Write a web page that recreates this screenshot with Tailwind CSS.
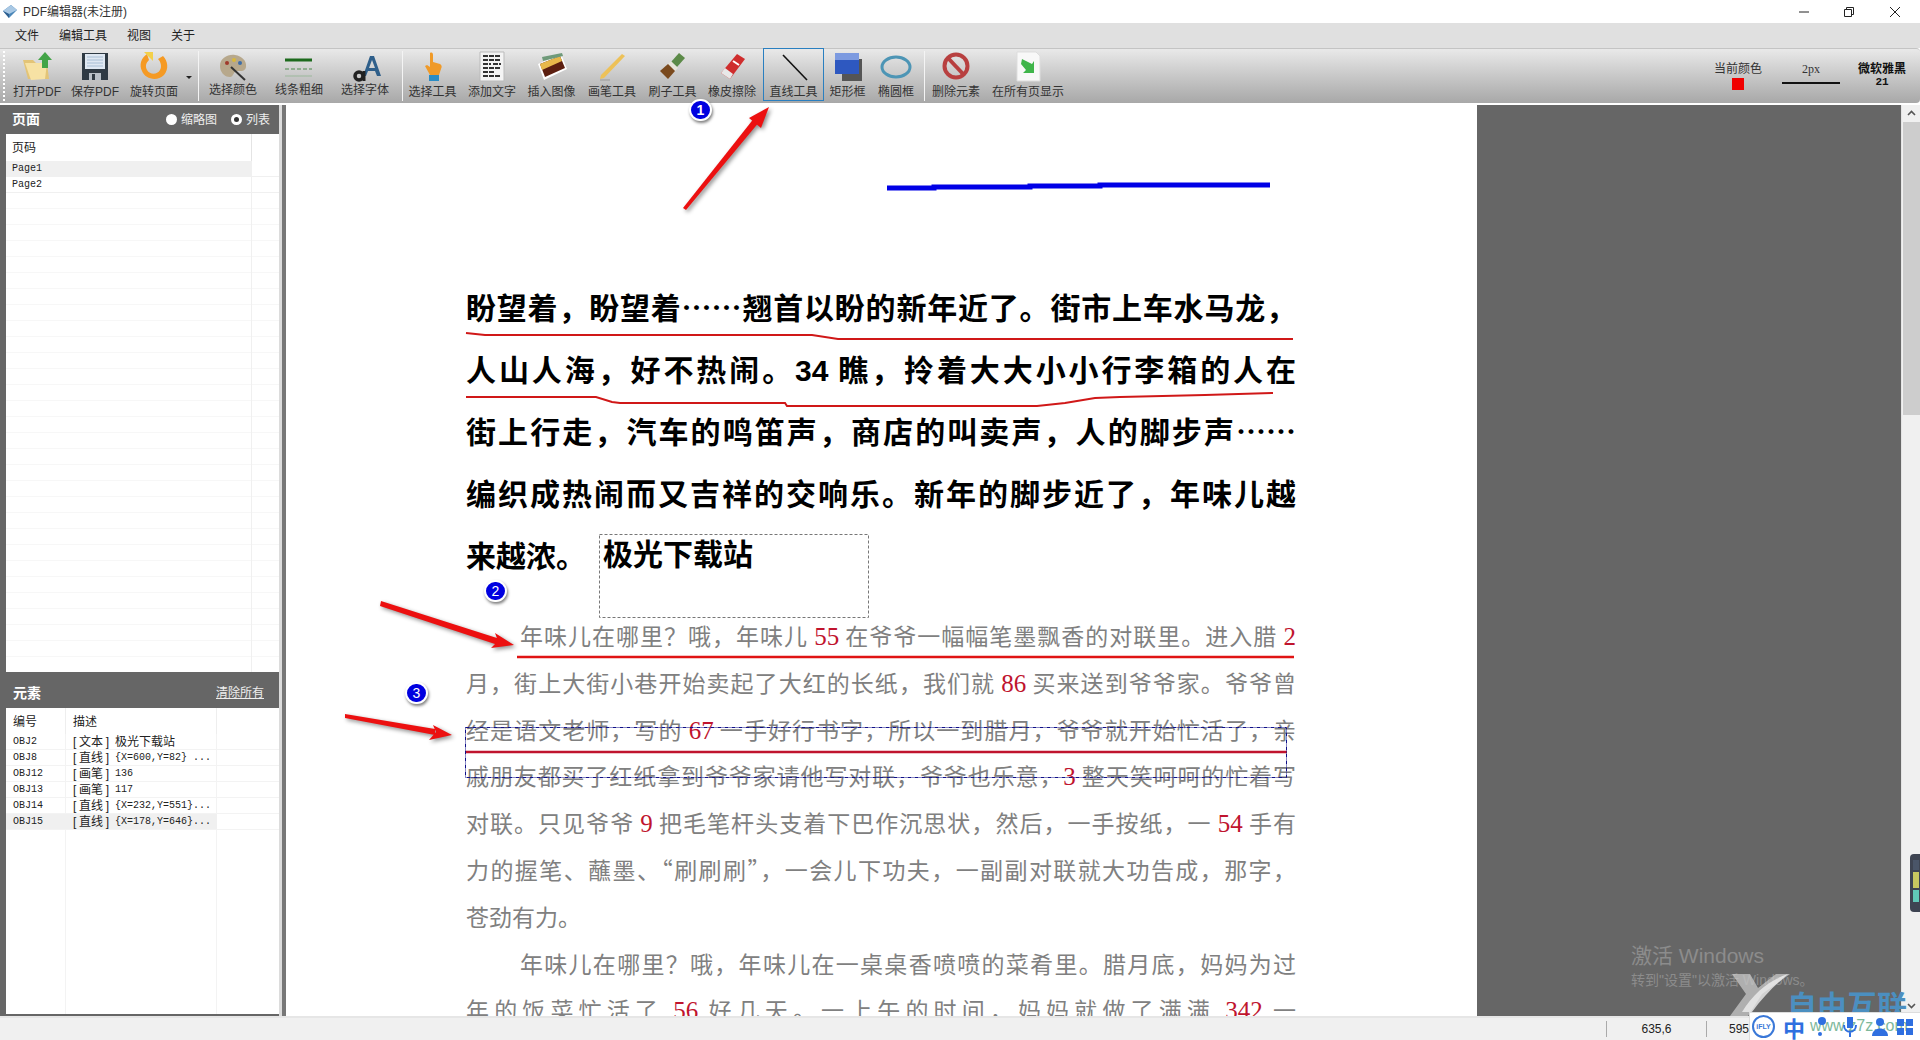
<!DOCTYPE html>
<html lang="zh">
<head>
  <meta charset="UTF-8" />
  <title>PDF编辑器(未注册)</title>
  <script src="https://cdn.jsdelivr.net/npm/@tailwindcss/browser@4"></script>
</head>
<body class="relative w-[1920px] h-[1040px] overflow-hidden flex flex-col bg-white text-[#222] text-xs font-['Liberation_Sans','Noto_Sans_CJK_SC',sans-serif]">

  <!-- title bar -->
  <header class="h-[23px] flex items-center bg-white">
    <svg class="ml-[2px] w-[16px] h-[16px]" viewBox="0 0 16 16"><path d="M1 7 9 1l6 5-8 8z" fill="#4a86b8"/><path d="M1 7l6 3 8-4-6-5z" fill="#a9c8e4"/><path d="M1 7l6 3v4z" fill="#2f5f8f"/></svg>
    <span class="ml-[5px] text-[#333]">PDF编辑器(未注册)</span>
    <div class="ml-auto flex items-center text-[#222]">
      <svg class="w-[12px] h-[12px] mr-[33px]" viewBox="0 0 12 12"><path d="M1 6h10" stroke="#222" fill="none"/></svg>
      <svg class="w-[12px] h-[12px] mr-[34px]" viewBox="0 0 12 12"><path d="M1.5 3.5h7v7h-7zM3.5 3.5v-2h7v7h-2" stroke="#222" fill="none"/></svg>
      <svg class="w-[12px] h-[12px] mr-[19px]" viewBox="0 0 12 12"><path d="M1 1l10 10M11 1 1 11" stroke="#222" fill="none"/></svg>
    </div>
  </header>

  <!-- menu -->
  <nav class="h-[25px] flex items-center bg-[#e0e0e0] pl-[15px] gap-[20px] text-[#222]">
    <span>文件</span><span>编辑工具</span><span>视图</span><span>关于</span>
  </nav>

  <!-- toolbar -->
  <div class="h-[55px] flex items-start bg-linear-to-b from-[#e9e9e9] to-[#a8a8a8] border-t border-[#c4c4c4] rounded-r-[4px] text-[#333]">
    <div class="w-[3px] h-[50px] ml-[3px] mt-[2px] mr-[2px] border-l-2 border-dotted border-white"></div>

    <button class="w-[58px] h-[53px] flex flex-col items-center pt-[2px]">
      <svg class="w-[32px] h-[31px]" viewBox="0 0 32 31"><path d="M2 9h10l3 3h11l2 16H7z" fill="#e3c477"/><path d="M4 12h22l-2 16-14 1z" fill="#f7e2a4"/><path d="M24 1l7 8h-4v8h-6V9h-4z" fill="#43a447"/></svg>
      <span class="mt-[2px] leading-[16px]">打开PDF</span>
    </button>
    <button class="w-[58px] h-[53px] flex flex-col items-center pt-[2px]">
      <svg class="w-[32px] h-[31px]" viewBox="0 0 32 31"><path d="M3 2h26v27H3z" fill="#2f3a44"/><path d="M6 3h20v15H6z" fill="#dfe8f2"/><path d="M8 6h16M8 9h16M8 12h16M8 15h16" stroke="#a8bed4"/><path d="M10 22h12v7H10z" fill="#b8c0c8"/><path d="M13 23h3v6h-3z" fill="#2f3a44"/></svg>
      <span class="mt-[2px] leading-[16px]">保存PDF</span>
    </button>
    <button class="w-[60px] h-[53px] flex flex-col items-center pt-[2px]">
      <svg class="w-[32px] h-[31px]" viewBox="0 0 32 31"><path d="M9 3c-6 4-8 11-5 17 3 8 15 11 22 4 5-6 4-14-1-19l-5 3c3 3 4 8 2 11-3 5-10 5-13 0-2-4-1-7 2-10z" fill="#f59a24"/><path d="M6 1h9v9l-3-3z" fill="#f3d04a"/></svg>
      <span class="mt-[2px] leading-[16px]">旋转页面</span>
    </button>
    <div class="w-[10px] h-[53px] flex items-center justify-center pt-[4px]">
      <div class="border-x-[3px] border-t-[3px] border-x-transparent border-t-[#222]"></div>
    </div>
    <div class="w-[1px] h-[50px] ml-[4px] mr-[1px] mt-[2px] bg-[#f4f4f4]"></div>

    <button class="w-[66px] h-[53px] flex flex-col items-center pt-[2px]">
      <svg class="w-[32px] h-[31px]" viewBox="0 0 32 31"><path d="M3 15C3 7 11 3 18 4c7 1 12 6 11 12-1 5-6 4-9 4-4 0-3 6-7 6-6 0-10-5-10-11z" fill="#b7a88c"/><circle cx="10" cy="12" r="2" fill="#a03a2c"/><circle cx="17" cy="9" r="2" fill="#d9b83c"/><circle cx="23" cy="12" r="2" fill="#3d6da8"/><path d="M14 16l14 13" stroke="#333" stroke-width="2"/></svg>
      <span class="leading-[16px]">选择颜色</span>
    </button>
    <button class="w-[66px] h-[53px] flex flex-col items-center pt-[2px]">
      <svg class="w-[32px] h-[31px]" viewBox="0 0 32 31"><path d="M2 9h27" stroke="#1d6a1d" stroke-width="3"/><path d="M2 18h27" stroke="#4c8a4c" stroke-dasharray="4 2"/><path d="M2 25h27" stroke="#9bb89b"/></svg>
      <span class="leading-[16px]">线条粗细</span>
    </button>
    <button class="w-[66px] h-[53px] flex flex-col items-center pt-[2px]">
      <svg class="w-[32px] h-[31px]" viewBox="0 0 32 31"><path d="M21 5h4l7 20h-4l-2-5h-7l-2 5h-3zm2 4-3 8h6z" fill="#2f5f8a" fill-rule="evenodd"/><circle cx="10" cy="25" r="4" fill="none" stroke="#222" stroke-width="3.500"/><path d="M15 20v10" stroke="#222" stroke-width="3"/></svg>
      <span class="leading-[16px]">选择字体</span>
    </button>
    <div class="w-[1px] h-[50px] ml-[4px] mt-[2px] bg-[#f4f4f4]"></div>

    <button class="w-[59px] h-[53px] flex flex-col items-center pt-[2px]">
      <svg class="w-[32px] h-[31px]" viewBox="0 0 32 31"><path d="M13 2c2-1 3 0 3 2v7l7 2c2 1 2 3 1 5l-2 6H13l-5-9 2-1 3 2z" fill="#f09a28"/><path d="M12 24h10v6H12z" fill="#2a8cc4"/></svg>
      <span class="mt-[2px] leading-[16px]">选择工具</span>
    </button>
    <button class="w-[60px] h-[53px] flex flex-col items-center pt-[2px]">
      <svg class="w-[32px] h-[31px]" viewBox="0 0 32 31"><path d="M4 1h24v29H4z" fill="#f4f4f4" stroke="#bbb"/><path d="M7 5h18M7 9h18M7 13h8M17 13h8M7 17h18M7 21h12M7 25h18" stroke="#333" stroke-width="2" stroke-dasharray="5 1"/></svg>
      <span class="mt-[2px] leading-[16px]">添加文字</span>
    </button>
    <button class="w-[59px] h-[53px] flex flex-col items-center pt-[2px]">
      <svg class="w-[32px] h-[31px]" viewBox="0 0 32 31"><path d="M2 13 25 3l6 15-23 11z" fill="#fff"/><path d="M4 13 24 5l5 12-20 9z" fill="#5c1f10"/><path d="M4 13 24 5l2 5-20 9z" fill="#e8b84a"/><path d="M6 6l20-4 1 3-20 5z" fill="#6f9a7a"/></svg>
      <span class="mt-[2px] leading-[16px]">插入图像</span>
    </button>
    <button class="w-[62px] h-[53px] flex flex-col items-center pt-[2px]">
      <svg class="w-[32px] h-[31px]" viewBox="0 0 32 31"><path d="M26 3l3 2L8 27l-4 1 1-4z" fill="#edc158"/><path d="M4 29h10" stroke="#999"/></svg>
      <span class="mt-[2px] leading-[16px]">画笔工具</span>
    </button>
    <button class="w-[59px] h-[53px] flex flex-col items-center pt-[2px]">
      <svg class="w-[32px] h-[31px]" viewBox="0 0 32 31"><path d="M22 2l6 5-8 9-6-5z" fill="#5c8a48"/><path d="M14 10l7 7-3 3-7-7z" fill="#e8e4d8"/><path d="M11 13l7 7-7 8-8-8z" fill="#7a4a1e"/></svg>
      <span class="mt-[2px] leading-[16px]">刷子工具</span>
    </button>
    <button class="w-[60px] h-[53px] flex flex-col items-center pt-[2px]">
      <svg class="w-[32px] h-[31px]" viewBox="0 0 32 31"><path d="M21 3l8 5-15 20-9-6z" fill="#cf2d2d"/><path d="M9 17l8 6-3 5-9-6z" fill="#e8e8e8"/><path d="M17 10l6 4" stroke="#fff" stroke-width="2"/></svg>
      <span class="mt-[2px] leading-[16px]">橡皮擦除</span>
    </button>
    <button class="w-[61px] h-[53px] ml-[1px] flex flex-col items-center border border-[#2a7fc0] -mt-[1px] pt-[2px]">
      <svg class="w-[32px] h-[31px]" viewBox="0 0 32 31"><path d="M5 4l24 25" stroke="#111" stroke-width="1.600"/></svg>
      <span class="mt-[2px] leading-[16px]">直线工具</span>
    </button>
    <button class="w-[47px] h-[53px] flex flex-col items-center pt-[2px]">
      <svg class="w-[32px] h-[31px]" viewBox="0 0 32 31"><path d="M10 8h20v22H10z" fill="#555"/><path d="M3 2h24v21H3z" fill="#2e58c0"/><path d="M3 2h24v7H3z" fill="#7c9ae0"/></svg>
      <span class="mt-[2px] leading-[16px]">矩形框</span>
    </button>
    <button class="w-[48px] h-[53px] ml-[1px] flex flex-col items-center pt-[2px]">
      <svg class="w-[32px] h-[31px]" viewBox="0 0 32 31"><ellipse cx="16" cy="16" rx="14" ry="10" fill="none" stroke="#4d95b5" stroke-width="3"/></svg>
      <span class="mt-[2px] leading-[16px]">椭圆框</span>
    </button>
    <div class="w-[1px] h-[50px] ml-[4px] mt-[2px] bg-[#f4f4f4]"></div>

    <button class="w-[60px] h-[53px] ml-[1px] flex flex-col items-center pt-[2px]">
      <svg class="w-[32px] h-[31px]" viewBox="0 0 32 31"><circle cx="16" cy="15" r="11.500" fill="none" stroke="#b84040" stroke-width="4"/><path d="M8 7l16 17" stroke="#b84040" stroke-width="4"/></svg>
      <span class="mt-[2px] leading-[16px]">删除元素</span>
    </button>
    <button class="w-[84px] h-[53px] flex flex-col items-center pt-[2px]">
      <svg class="w-[32px] h-[31px]" viewBox="0 0 32 31"><path d="M5 1h19l4 4v25H5z" fill="#f8f8f8" stroke="#ddd"/><path d="M10 8l10 5 2-3v12H11l3-3-5-6z" fill="#3fb54a"/></svg>
      <span class="mt-[2px] leading-[16px]">在所有页显示</span>
    </button>

    <div class="ml-auto flex mr-[8px]">
      <div class="w-[60px] flex flex-col items-center pt-[12px] text-[12px] leading-[16px]">
        <span>当前颜色</span>
        <div class="w-[12px] h-[12px] bg-[#f00000] mt-[1px]"></div>
      </div>
      <div class="w-[58px] ml-[14px] flex flex-col items-center pt-[13px]">
        <span class="font-['Liberation_Serif'] leading-[15px]">2px</span>
        <div class="w-[58px] h-[2px] bg-[#111] mt-[5px]"></div>
      </div>
      <div class="w-[60px] ml-[12px] flex flex-col items-center pt-[14px] font-bold leading-[13px] text-[#111]">
        <span>微软雅黑</span>
        <span class="font-['Liberation_Mono'] text-[11px]">21</span>
      </div>
    </div>
  </div>
  <div class="h-[2px] bg-white"></div>

  <!-- main area -->
  <main class="h-[911px] flex overflow-hidden">
    <aside class="w-[286px] flex bg-[#666] shrink-0">
      <div class="w-[273px] ml-[6px] flex flex-col">
        <div class="h-[29px] flex items-center text-white">
          <span class="ml-[6px] text-[14px] font-bold">页面</span>
          <div class="ml-auto flex items-center mr-[9px] text-[#eee]">
            <div class="w-[11px] h-[11px] rounded-full bg-white"></div>
            <span class="ml-[4px]">缩略图</span>
            <div class="w-[11px] h-[11px] rounded-full bg-white border-[3px] border-white flex items-center justify-center ml-[14px]"><div class="w-[5px] h-[5px] rounded-full bg-[#333]"></div></div>
            <span class="ml-[4px]">列表</span>
          </div>
        </div>
        <div class="h-[538px] bg-white flex flex-col">
          <div class="h-[27px] flex"><div class="w-[246px] pl-[6px] leading-[28px] border-r border-[#e4e4e4]">页码</div></div>
          <div class="h-[16px] flex font-['Liberation_Mono'] text-[10px] leading-[16px] border-b border-[#f0f0f0]"><div class="w-[246px] pl-[6px] bg-[#f0f0f0]">Page1</div></div>
          <div class="h-[16px] flex font-['Liberation_Mono'] text-[10px] leading-[16px] border-b border-[#f0f0f0]"><div class="w-[246px] pl-[6px] border-r border-[#f0f0f0]">Page2</div></div>
          <div class="flex-1 bg-[repeating-linear-gradient(to_bottom,transparent_0,transparent_15px,#f7f7f7_15px,#f7f7f7_16px)]"><div class="w-[246px] h-full border-r border-[#f0f0f0]"></div></div>
        </div>
        <div class="h-[36px] flex items-center pt-[6px] text-white">
          <span class="ml-[7px] text-[14px] font-bold">元素</span>
          <span class="ml-auto mr-[15px] underline text-[#eee]">清除所有</span>
        </div>
        <div class="h-[306px] bg-white flex flex-col">
          <div class="h-[26px] flex leading-[28px]"><div class="w-[60px] pl-[7px] border-r border-[#eee]">编号</div><div class="w-[151px] pl-[7px] border-r border-[#eee]">描述</div></div>
          <div class="h-[16px] flex border-b border-[#f3f3f3]"><div class="w-[60px] pl-[7px] leading-[16px] border-r border-[#f3f3f3] font-['Liberation_Mono'] text-[10px]">OBJ2</div><div class="w-[151px] pl-[7px] flex items-center border-r border-[#f3f3f3] whitespace-nowrap"><span class="flex justify-between w-[36px] mr-[6px]"><span>[</span><span>文本</span><span>]</span></span><span>极光下载站</span></div></div>
          <div class="h-[16px] flex border-b border-[#f3f3f3]"><div class="w-[60px] pl-[7px] leading-[16px] border-r border-[#f3f3f3] font-['Liberation_Mono'] text-[10px]">OBJ8</div><div class="w-[151px] pl-[7px] flex items-center border-r border-[#f3f3f3] whitespace-nowrap"><span class="flex justify-between w-[36px] mr-[6px]"><span>[</span><span>直线</span><span>]</span></span><span class="font-['Liberation_Mono'] text-[10px]">{X=600,Y=82} ...</span></div></div>
          <div class="h-[16px] flex border-b border-[#f3f3f3]"><div class="w-[60px] pl-[7px] leading-[16px] border-r border-[#f3f3f3] font-['Liberation_Mono'] text-[10px]">OBJ12</div><div class="w-[151px] pl-[7px] flex items-center border-r border-[#f3f3f3] whitespace-nowrap"><span class="flex justify-between w-[36px] mr-[6px]"><span>[</span><span>画笔</span><span>]</span></span><span class="font-['Liberation_Mono'] text-[10px]">136</span></div></div>
          <div class="h-[16px] flex border-b border-[#f3f3f3]"><div class="w-[60px] pl-[7px] leading-[16px] border-r border-[#f3f3f3] font-['Liberation_Mono'] text-[10px]">OBJ13</div><div class="w-[151px] pl-[7px] flex items-center border-r border-[#f3f3f3] whitespace-nowrap"><span class="flex justify-between w-[36px] mr-[6px]"><span>[</span><span>画笔</span><span>]</span></span><span class="font-['Liberation_Mono'] text-[10px]">117</span></div></div>
          <div class="h-[16px] flex border-b border-[#f3f3f3]"><div class="w-[60px] pl-[7px] leading-[16px] border-r border-[#f3f3f3] font-['Liberation_Mono'] text-[10px]">OBJ14</div><div class="w-[151px] pl-[7px] flex items-center border-r border-[#f3f3f3] whitespace-nowrap"><span class="flex justify-between w-[36px] mr-[6px]"><span>[</span><span>直线</span><span>]</span></span><span class="font-['Liberation_Mono'] text-[10px]">{X=232,Y=551}...</span></div></div>
          <div class="h-[16px] flex border-b border-[#f3f3f3]"><div class="w-[60px] pl-[7px] leading-[16px] bg-[#f0f0f0] font-['Liberation_Mono'] text-[10px]">OBJ15</div><div class="w-[151px] pl-[7px] flex items-center bg-[#f0f0f0] whitespace-nowrap"><span class="flex justify-between w-[36px] mr-[6px]"><span>[</span><span>直线</span><span>]</span></span><span class="font-['Liberation_Mono'] text-[10px]">{X=178,Y=646}...</span></div></div>
          <div class="flex-1 flex"><div class="w-[60px] border-r border-[#f3f3f3]"></div><div class="w-[151px] border-r border-[#f3f3f3]"></div></div>
        </div>
      </div>
      <div class="w-[3px] bg-[#dcdcdc]"></div>
      <div class="w-[4px] bg-[#777]"></div>
    </aside>

    <!-- document page -->
    <section class="w-[1191px] bg-white pl-[180px] pt-[170px] overflow-hidden shrink-0 font-['Noto_Sans_CJK_SC','Liberation_Sans',sans-serif]">
      <div class="w-[830px] text-[30px] font-bold leading-[62px] text-black">
        <p class="[text-align-last:justify] whitespace-nowrap">盼望着，盼望着……翘首以盼的新年近了。街市上车水马龙，</p>
        <p class="[text-align-last:justify] whitespace-nowrap">人山人海，好不热闹。<span class="font-['Liberation_Sans'] leading-[0]">34</span> 瞧，拎着大大小小行李箱的人在</p>
        <p class="[text-align-last:justify] whitespace-nowrap">街上行走，汽车的鸣笛声，商店的叫卖声，人的脚步声……</p>
        <p class="[text-align-last:justify] whitespace-nowrap">编织成热闹而又吉祥的交响乐。新年的脚步近了，年味儿越</p>
        <p>来越浓。</p>
      </div>
      <div class="w-[830px] mt-[27px] text-[23px] leading-[46.800px] text-[#808080] whitespace-nowrap">
        <p class="pl-[54px] [text-align-last:justify]">年味儿在哪里？哦，年味儿 <span class="text-[#c0142e] font-['Liberation_Serif'] text-[25px] leading-[0]">55</span> 在爷爷一幅幅笔墨飘香的对联里。进入腊 <span class="text-[#c0142e] font-['Liberation_Serif'] text-[25px] leading-[0]">2</span></p>
        <p class="[text-align-last:justify]">月，街上大街小巷开始卖起了大红的长纸，我们就 <span class="text-[#c0142e] font-['Liberation_Serif'] text-[25px] leading-[0]">86</span> 买来送到爷爷家。爷爷曾</p>
        <p class="[text-align-last:justify]">经是语文老师，写的 <span class="text-[#c0142e] font-['Liberation_Serif'] text-[25px] leading-[0]">67</span> 一手好行书字，所以一到腊月，爷爷就开始忙活了，亲</p>
        <p class="[text-align-last:justify]">戚朋友都买了红纸拿到爷爷家请他写对联，爷爷也乐意，<span class="text-[#c0142e] font-['Liberation_Serif'] text-[25px] leading-[0]">3</span> 整天笑呵呵的忙着写</p>
        <p class="[text-align-last:justify]">对联。只见爷爷 <span class="text-[#c0142e] font-['Liberation_Serif'] text-[25px] leading-[0]">9</span> 把毛笔杆头支着下巴作沉思状，然后，一手按纸，一 <span class="text-[#c0142e] font-['Liberation_Serif'] text-[25px] leading-[0]">54</span> 手有</p>
        <p class="[text-align-last:justify]">力的握笔、蘸墨、“刷刷刷”，一会儿下功夫，一副副对联就大功告成，那字，</p>
        <p>苍劲有力。</p>
        <p class="pl-[54px] [text-align-last:justify]">年味儿在哪里？哦，年味儿在一桌桌香喷喷的菜肴里。腊月底，妈妈为过</p>
        <p class="[text-align-last:justify]">年的饭菜忙活了 <span class="text-[#c0142e] font-['Liberation_Serif'] text-[25px] leading-[0]">56</span> 好几天。一上午的时间，妈妈就做了满满 <span class="text-[#c0142e] font-['Liberation_Serif'] text-[25px] leading-[0]">342</span> 一</p>
      </div>
    </section>

    <div class="flex-1 bg-[#666]"></div>

    <!-- scrollbar -->
    <div class="w-[19px] bg-[#f0f0f0] flex flex-col items-center border-l border-[#e4e4e4]">
      <svg class="w-[17px] h-[17px] shrink-0" viewBox="0 0 17 17"><path d="M5 10l3.500-3.500L12 10" stroke="#555" stroke-width="1.600" fill="none"/></svg>
      <div class="w-[17px] h-[293px] bg-[#cdcdcd]"></div>
      <svg class="w-[17px] h-[17px] shrink-0 mt-auto mb-[2px]" viewBox="0 0 17 17"><path d="M5 7l3.500 3.500L12 7" stroke="#555" stroke-width="1.600" fill="none"/></svg>
    </div>
  </main>

  <!-- status bar -->
  <footer class="h-[24px] flex items-center bg-[#f0f0f0] border-t-2 border-[#e6e6e6] text-[12px] text-[#222]">
    <div class="w-[1606px] h-full"></div>
    <div class="w-[100px] h-[16px] border-l border-[#aaa] text-center leading-[16px]">635,6</div>
    <div class="h-[16px] border-l border-[#aaa] pl-[22px] leading-[16px]">595</div>
  </footer>

  <!-- annotations drawn over the page -->
  <svg class="absolute left-0 top-0 w-[1920px] h-[1040px] pointer-events-none" viewBox="0 0 1920 1040">
    <path d="M887 188H934V187H1030V186H1100V185H1270" fill="none" stroke="#0000e6" stroke-width="5"/>
    <path d="M466 333 485 335H812L838 339H1293" fill="none" stroke="#d01818" stroke-width="2"/>
    <path d="M466 397H596L612 402 620 403H785L787 406H1037L1065 403 1095 398 1120 397 1205 395 1273 393" fill="none" stroke="#d01818" stroke-width="2"/>
    <path d="M517 657H1294" stroke="#e01414" stroke-width="2.500"/>
    <path d="M465 752H1287" stroke="#c0142e" stroke-width="2.500"/>
    <rect x="465.500" y="727.500" width="821" height="50" fill="none" stroke="#101088" stroke-dasharray="4 1 1 1"/>
    <rect x="599.500" y="534.500" width="269" height="83" fill="none" stroke="#777" stroke-dasharray="3 2"/>
    <g class="drop-shadow-[2px_2px_2px_rgba(0,0,0,0.45)]" fill="#ec1010">
      <path d="M683 208 755 117 760 121 686 210z"/>
      <path d="M769 107 749 118 761 128z"/>
      <path d="M381 601 500 639 498 645 380 606z"/>
      <path d="M514 645 495 633 498 641 491 648z"/>
      <path d="M345 714 435 729 435 735 345 718z"/>
      <path d="M452 735 433 725 436 732 429 740z"/>
    </g>
  </svg>

  <div class="absolute left-[603px] top-[530px] text-[30px] leading-[44px] font-bold text-black font-['Noto_Sans_CJK_SC']">极光下载站</div>

  <div class="absolute left-[689px] top-[99px] w-[23px] h-[22px] rounded-full bg-[#0000e0] border-2 border-white shadow-[1px_2px_3px_rgba(0,0,0,0.5)] flex items-center justify-center text-white text-[14px] font-bold">1</div>
  <div class="absolute left-[484px] top-[580px] w-[23px] h-[22px] rounded-full bg-[#0000e0] border-2 border-white shadow-[1px_2px_3px_rgba(0,0,0,0.5)] flex items-center justify-center text-white text-[14px]">2</div>
  <div class="absolute left-[405px] top-[682px] w-[23px] h-[22px] rounded-full bg-[#0000e0] border-2 border-white shadow-[1px_2px_3px_rgba(0,0,0,0.5)] flex items-center justify-center text-white text-[14px]">3</div>

  <!-- side widget -->
  <div class="absolute left-[1910px] top-[854px] w-[10px] h-[58px] rounded-l-[4px] bg-[#3e4452] flex flex-col gap-[2px] pl-[3px] pt-[6px]">
    <div class="w-[6px] h-[10px] bg-[#4a5568]"></div>
    <div class="w-[6px] h-[16px] bg-[#c8c860]"></div>
    <div class="w-[6px] h-[12px] bg-[#60c8b8]"></div>
  </div>

  <!-- activation text -->
  <div class="absolute left-[1631px] top-[942px] text-[21px] leading-[28px] text-[#8c8c8c]">激活 Windows</div>
  <div class="absolute left-[1631px] top-[971px] text-[14px] leading-[18px] text-[#8c8c8c]">转到"设置"以激活 Windows。</div>

  <!-- watermark -->
  <svg class="absolute left-[1728px] top-[972px] w-[70px] h-[44px]" viewBox="0 0 70 44"><path d="M4 2h18l8 14L48 2h14L34 22 20 44H2l16-22z" fill="#c8c8c8" fill-opacity="0.75"/><path d="M14 40C26 20 42 8 60 2 46 14 34 26 24 40z" fill="#eee" fill-opacity="0.8"/></svg>
  <div class="absolute left-[1787px] top-[984px] text-[30px] leading-[40px] font-bold text-[#4b8fc0] whitespace-nowrap font-['Noto_Sans_CJK_SC'] w-[120px] overflow-hidden">自由互联</div>

  <!-- IME bar -->
  <div class="absolute left-[1749px] top-[1012px] w-[171px] h-[28px] bg-white border-t border-l border-[#ddd] flex items-center pl-[2px]">
    <div class="w-[23px] h-[23px] rounded-full border-2 border-[#3a78d8] flex items-center justify-center text-[7px] font-bold text-[#3a78d8]">iFLY</div>
    <span class="ml-[8px] text-[22px] font-bold leading-[24px] text-[#2f6fe0] font-['Noto_Sans_CJK_SC']">中</span>
    <span class="absolute left-[60px] top-[1px] text-[16px] leading-[24px] text-[#7db89a] whitespace-nowrap">www.z7z.com</span>
    <!-- bar icons sit on top of the watermark text -->
    <svg class="absolute left-[65px] top-[3px] w-[14px] h-[22px]" viewBox="0 0 14 22"><circle cx="7" cy="5" r="4" fill="#2f6fe0"/><circle cx="5" cy="18" r="2" fill="#2f6fe0"/></svg>
    <svg class="absolute left-[92px] top-[3px] w-[16px] h-[22px]" viewBox="0 0 16 22"><path d="M5 1h6v11H5z" fill="#2f6fe0"/><path d="M2 9c0 9 12 9 12 0M8 16v5" fill="none" stroke="#2f6fe0" stroke-width="2"/></svg>
    <svg class="absolute left-[121px] top-[4px] w-[18px] h-[20px]" viewBox="0 0 18 20"><circle cx="9" cy="5" r="4" fill="#2f6fe0"/><path d="M1 19c0-10 16-10 16 0z" fill="#2f6fe0"/></svg>
    <svg class="absolute left-[146px] top-[5px] w-[18px] h-[18px]" viewBox="0 0 18 18"><path d="M1 1h7v7H1zM10 1h7v7h-7zM1 10h7v7H1zM10 10h7v7h-7z" fill="#2f6fe0"/></svg>
  </div>
</body>
</html>
